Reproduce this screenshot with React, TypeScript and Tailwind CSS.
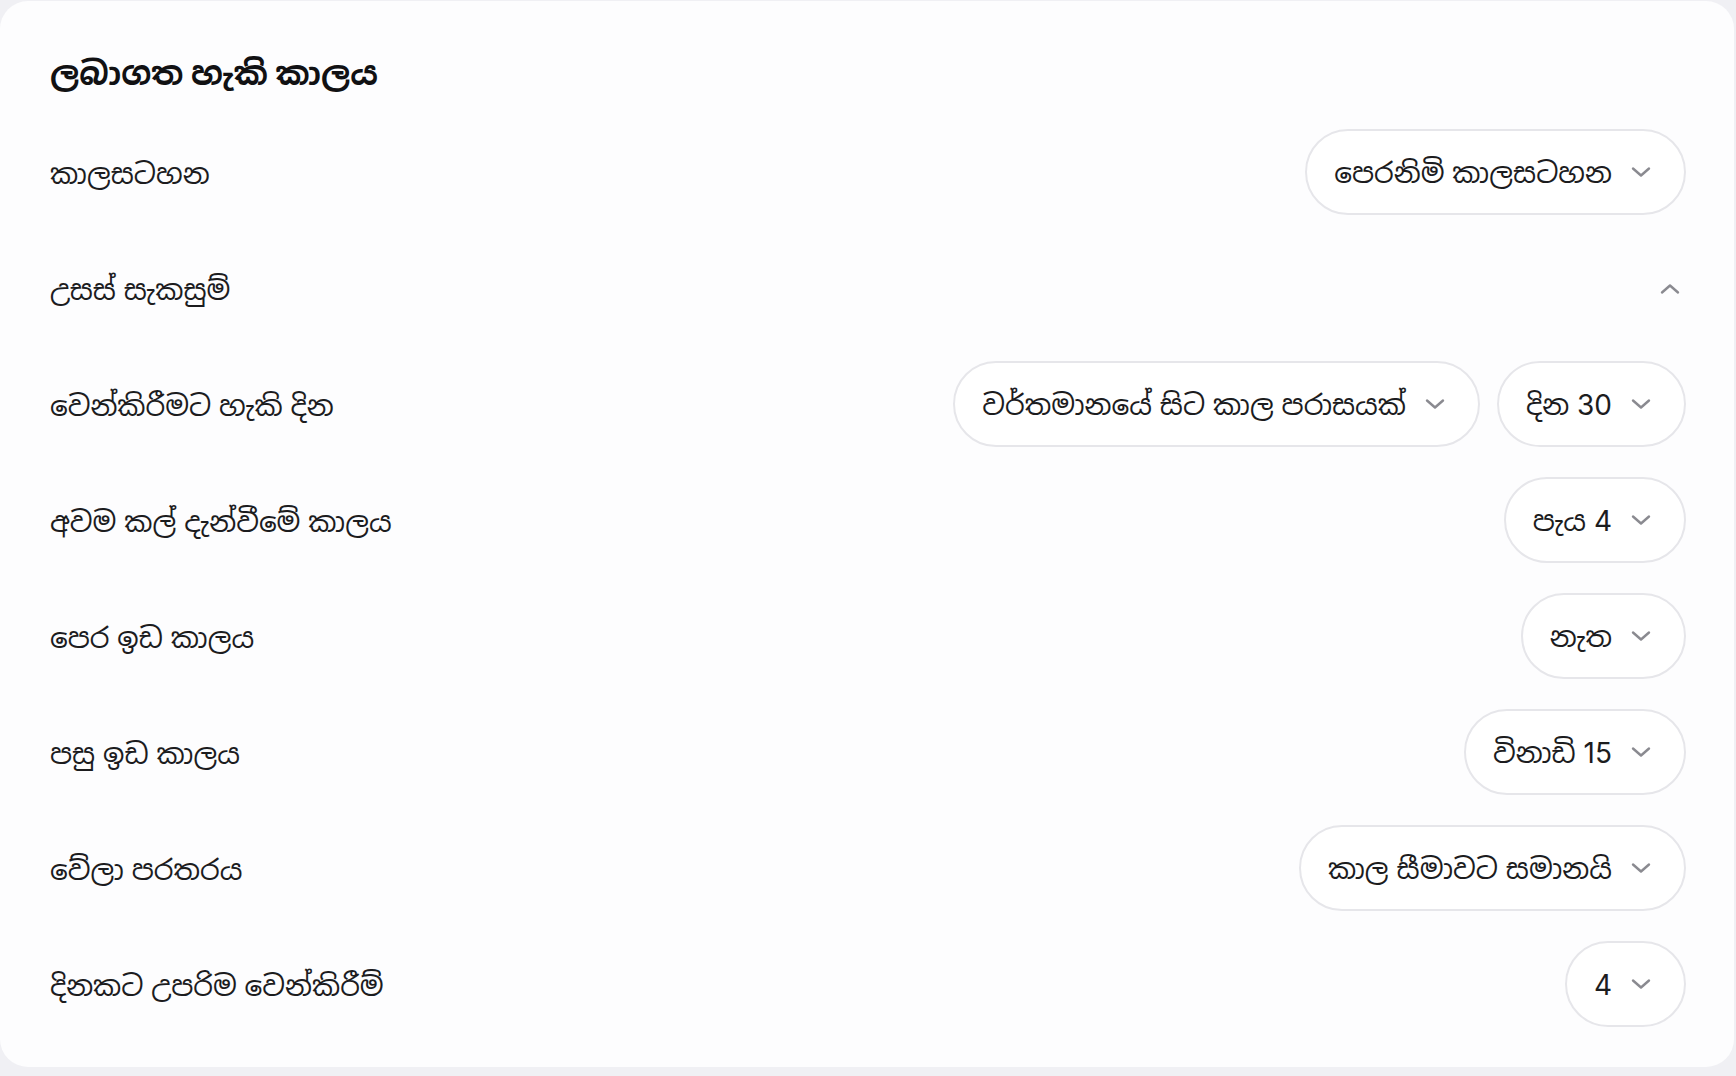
import React from 'react';

type Row = { label: string; values?: string[]; collapsible?: boolean };

const rows: Row[] = [
  { label: 'කාලසටහන', values: ['පෙරනිමි කාලසටහන'] },
  { label: 'උසස් සැකසුම්', collapsible: true },
  { label: 'වෙන්කිරීමට හැකි දින', values: ['වර්තමානයේ සිට කාල පරාසයක්', 'දින 30'] },
  { label: 'අවම කල් දැන්වීමේ කාලය', values: ['පැය 4'] },
  { label: 'පෙර ඉඩ කාලය', values: ['නැත'] },
  { label: 'පසු ඉඩ කාලය', values: ['විනාඩි 15'] },
  { label: 'වේලා පරතරය', values: ['කාල සීමාවට සමානයි'] },
  { label: 'දිනකට උපරිම වෙන්කිරීම්', values: ['4'] },
];

function Chevron({ up = false }: { up?: boolean }) {
  return (
    <svg width="20" height="12" viewBox="0 0 20 12" fill="none" className="shrink-0 text-[#8a8a90]">
      <path
        d={up ? 'M2 9.5 L10 2.5 L18 9.5' : 'M2 2.5 L10 9.5 L18 2.5'}
        stroke="currentColor"
        strokeWidth="2.4"
        strokeLinecap="round"
        strokeLinejoin="round"
      />
    </svg>
  );
}

function SelectPill({ value }: { value: string }) {
  return (
    <button className="h-[86px] flex items-center gap-[19px] pl-[27px] pr-[33px] rounded-full bg-white border-2 border-[#e6e6ea] text-[28px] text-[#1c1c1e] whitespace-nowrap">
      <span className="pt-[2px]">{value}</span>
      <Chevron />
    </button>
  );
}

export default function App() {
  return (
    <div className="min-h-screen bg-[#f0f0f4] pt-px pr-0.5 pb-2 font-['Inter','Noto_Sans_Sinhala',sans-serif]">
      <div className="bg-[#fdfdfe] rounded-[28px] pl-[50px] pr-[48px] pt-[50px] pb-[40px] h-[1066px]">
        <h1 className="text-[32.5px] leading-[46px] font-bold text-[#111113]">ලබාගත හැකි කාලය</h1>

        <div className="mt-[32px] flex flex-col gap-[30px]">
          {rows.map((row) => (
            <div key={row.label} className="h-[86px] flex items-center justify-between">
              <span className="pt-[4px] text-[28px] text-[#1c1c1e]">{row.label}</span>
              {row.collapsible ? (
                <div className="pr-[6px] pt-[2px]">
                  <Chevron up />
                </div>
              ) : (
                <div className="flex items-center gap-[17px]">
                  {row.values?.map((v) => (
                    <SelectPill key={v} value={v} />
                  ))}
                </div>
              )}
            </div>
          ))}
        </div>
      </div>
    </div>
  );
}
